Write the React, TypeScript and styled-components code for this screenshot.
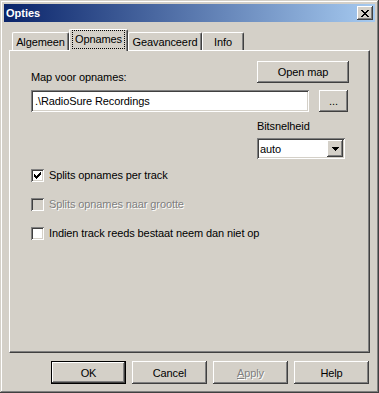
import React from "react";
import styled, { createGlobalStyle, css } from "styled-components";

const Global = createGlobalStyle`
  html, body { margin: 0; padding: 0; background: #d4d0c8; }
  body { font-family: "Liberation Sans", Arial, sans-serif; font-size: 11px; color: #000; letter-spacing: -0.1px; }
  * { box-sizing: border-box; }
`;

const raised = css`
  box-shadow: inset -1px -1px #404040, inset 1px 1px #ffffff, inset -2px -2px #808080, inset 2px 2px #d4d0c8;
`;
const sunken = css`
  box-shadow: inset 1px 1px #808080, inset -1px -1px #ffffff, inset 2px 2px #404040, inset -2px -2px #d4d0c8;
`;

const Window = styled.div`
  width: 379px;
  height: 393px;
  padding: 4px;
  background: #d4d0c8;
  box-shadow: inset -1px -1px #404040, inset 1px 1px #d4d0c8, inset -2px -2px #808080, inset 2px 2px #ffffff;
  display: flex;
  flex-direction: column;
`;

const TitleBar = styled.div`
  height: 18px;
  display: flex;
  align-items: center;
  padding: 0 2px 0 2px;
  background: linear-gradient(to right, #0a246a, #a6caf0);
`;

const Title = styled.span`
  color: #fff;
  font-weight: bold;
  font-size: 11px;
  letter-spacing: 0;
`;

const CloseButton = styled.div`
  margin-left: auto;
  width: 16px;
  height: 14px;
  background: #d4d0c8;
  ${raised};
  display: flex;
  align-items: center;
  justify-content: center;
`;

const Body = styled.div`
  flex: 1;
  display: flex;
  flex-direction: column;
  padding: 7px 5px 0 5px;
`;

const TabStrip = styled.div`
  height: 21px;
  display: flex;
  align-items: flex-end;
  padding-left: 3px;
  position: relative;
  z-index: 1;
`;

const Tab = styled.div<{ $w: number; $active?: boolean }>`
  width: ${(p) => p.$w}px;
  height: ${(p) => (p.$active ? 22 : 18)}px;
  margin-bottom: ${(p) => (p.$active ? -1 : 0)}px;
  background: #d4d0c8;
  border-top: 1px solid #fff;
  border-left: 1px solid #fff;
  border-right: 1px solid #404040;
  border-radius: 2px 2px 0 0;
  box-shadow: inset -1px 0 #808080;
  display: flex;
  align-items: ${(p) => (p.$active ? "flex-start" : "center")};
  justify-content: center;
  padding-top: ${(p) => (p.$active ? 0 : 1)}px;
`;

const FocusLabel = styled.span`
  border: 1px dotted #000;
  padding: 1px 2px 2px 2px;
  line-height: 14px;
`;

const Panel = styled.div`
  height: 303px;
  border-top: 1px solid #fff;
  border-left: 1px solid #fff;
  border-right: 1px solid #404040;
  border-bottom: 1px solid #404040;
  box-shadow: inset -1px -1px #808080;
  padding: 10px 20px 0 21px;
  display: flex;
  flex-direction: column;
`;

const HeaderRow = styled.div`
  display: flex;
  justify-content: space-between;
  align-items: flex-end;
`;

const Label = styled.span<{ $drop?: number }>`
  line-height: 13px;
  display: block;
  margin-bottom: ${(p) => -(p.$drop ?? 0)}px;
`;

const PushButton = styled.button<{ $w: number; $h?: number; $default?: boolean }>`
  width: ${(p) => p.$w}px;
  height: ${(p) => p.$h ?? 23}px;
  background: #d4d0c8;
  border: ${(p) => (p.$default ? "1px solid #000" : "none")};
  ${raised};
  font-family: "Liberation Sans", Arial, sans-serif;
  font-size: 11px;
  letter-spacing: -0.1px;
  color: #000;
  padding: 0;
  display: flex;
  align-items: center;
  justify-content: center;
`;

const DisabledText = styled.span`
  color: #808080;
  text-shadow: 1px 1px #fff;
`;

const PathRow = styled.div`
  display: flex;
  gap: 10px;
  margin-top: 7px;
`;

const TextInput = styled.div`
  width: 278px;
  height: 22px;
  background: #fff;
  ${sunken};
  padding: 0 4px;
  display: flex;
  align-items: center;
`;

const BitrateBlock = styled.div`
  margin-left: auto;
  width: 92px;
  margin-top: 8px;
  display: flex;
  flex-direction: column;
  gap: 5px;
`;

const Select = styled.div`
  width: 88px;
  height: 21px;
  background: #fff;
  ${sunken};
  padding: 2px 2px 2px 3px;
  display: flex;
  align-items: center;
`;

const SelectValue = styled.span`
  flex: 1;
`;

const DropButton = styled.div`
  width: 16px;
  height: 17px;
  background: #d4d0c8;
  ${raised};
  display: flex;
  align-items: center;
  justify-content: center;
`;

const CheckList = styled.div`
  display: flex;
  flex-direction: column;
  gap: 16px;
  margin-top: 10px;
`;

const CheckRow = styled.div`
  display: flex;
  align-items: center;
  gap: 5px;
  height: 13px;
`;

const Box = styled.div<{ $disabled?: boolean }>`
  width: 13px;
  height: 13px;
  background: ${(p) => (p.$disabled ? "#d4d0c8" : "#fff")};
  ${sunken};
  display: flex;
  align-items: center;
  justify-content: center;
`;

const CheckText = styled.span<{ $disabled?: boolean }>`
  line-height: 13px;
  color: ${(p) => (p.$disabled ? "#808080" : "#000")};
  text-shadow: ${(p) => (p.$disabled ? "1px 1px #fff" : "none")};
`;

const ButtonRow = styled.div`
  display: flex;
  justify-content: flex-end;
  gap: 6px;
  margin-top: 8px;
  padding-right: 1px;
`;

const Mnemonic = styled.span`
  text-decoration: underline;
`;

const CheckMark = () => (
  <svg width="7" height="7" viewBox="0 0 7 7" shapeRendering="crispEdges">
    <path
      d="M6 0h1v3h-1zM5 1h1v3h-1zM4 2h1v3h-1zM0 2h1v3h-1zM1 3h1v3h-1zM2 4h1v3h-1zM3 3h1v3h-1z"
      fill="#000"
    />
  </svg>
);

const CloseGlyph = () => (
  <svg width="8" height="7" viewBox="0 0 8 7" shapeRendering="crispEdges">
    <path
      d="M0 0h2v1h-2zM6 0h2v1h-2zM1 1h2v1h-2zM5 1h2v1h-2zM2 2h4v1h-4zM3 3h2v1h-2zM2 4h4v1h-4zM1 5h2v1h-2zM5 5h2v1h-2zM0 6h2v1h-2zM6 6h2v1h-2z"
      fill="#000"
    />
  </svg>
);

const DownArrow = () => (
  <svg width="7" height="4" viewBox="0 0 7 4" shapeRendering="crispEdges">
    <path d="M0 0h7v1h-7zM1 1h5v1h-5zM2 2h3v1h-3zM3 3h1v1h-1z" fill="#000" />
  </svg>
);

export default function App() {
  return (
    <>
      <Global />
      <Window>
        <TitleBar>
          <Title>Opties</Title>
          <CloseButton>
            <CloseGlyph />
          </CloseButton>
        </TitleBar>
        <Body>
          <TabStrip>
            <Tab $w={57}>Algemeen</Tab>
            <Tab $w={59} $active>
              <FocusLabel>Opnames</FocusLabel>
            </Tab>
            <Tab $w={74}>Geavanceerd</Tab>
            <Tab $w={42}>Info</Tab>
          </TabStrip>
          <Panel>
            <HeaderRow>
              <Label $drop={1}>Map voor opnames:</Label>
              <PushButton $w={92} $h={22}>Open map</PushButton>
            </HeaderRow>
            <PathRow>
              <TextInput>.\RadioSure Recordings</TextInput>
              <PushButton $w={29} $h={22}>...</PushButton>
            </PathRow>
            <BitrateBlock>
              <Label>Bitsnelheid</Label>
              <Select>
                <SelectValue>auto</SelectValue>
                <DropButton>
                  <DownArrow />
                </DropButton>
              </Select>
            </BitrateBlock>
            <CheckList>
              <CheckRow>
                <Box>
                  <CheckMark />
                </Box>
                <CheckText>Splits opnames per track</CheckText>
              </CheckRow>
              <CheckRow>
                <Box $disabled />
                <CheckText $disabled>Splits opnames naar grootte</CheckText>
              </CheckRow>
              <CheckRow>
                <Box />
                <CheckText>Indien track reeds bestaat neem dan niet op</CheckText>
              </CheckRow>
            </CheckList>
          </Panel>
          <ButtonRow>
            <PushButton $w={75} $default>OK</PushButton>
            <PushButton $w={75}>Cancel</PushButton>
            <PushButton $w={75}>
              <DisabledText>
                <Mnemonic>A</Mnemonic>pply
              </DisabledText>
            </PushButton>
            <PushButton $w={75}>Help</PushButton>
          </ButtonRow>
        </Body>
      </Window>
    </>
  );
}
